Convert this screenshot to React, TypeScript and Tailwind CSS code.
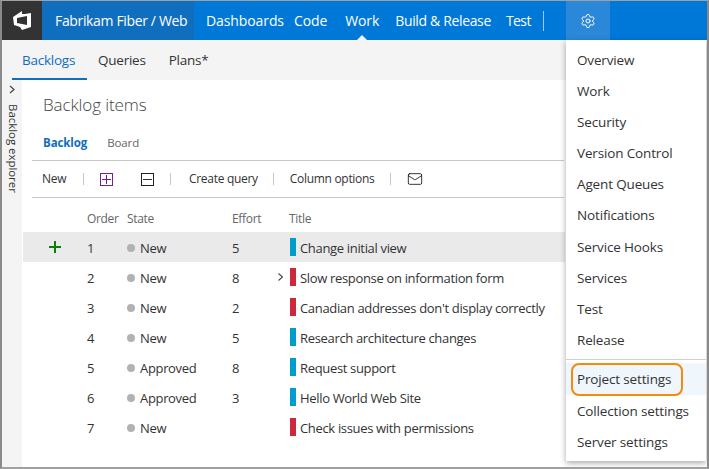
import { Mail, Settings } from "lucide-react"

const NAV = [
  { label: "Dashboards", cls: "" },
  { label: "Code", cls: "ml-[10px]" },
  { label: "Work", cls: "ml-[18px]" },
  { label: "Build & Release", cls: "ml-[16px] tracking-[-0.35px]" },
  { label: "Test", cls: "ml-[15px] tracking-[-0.6px]" },
]
const MENU = ["Overview", "Work", "Security", "Version Control", "Agent Queues", "Notifications", "Service Hooks", "Services", "Test", "Release"]
const ROWS = [
  { order: 1, state: "New", effort: "5", title: "Change initial view", color: "bg-[#009ccc]" },
  { order: 2, state: "New", effort: "8", title: "Slow response on information form", color: "bg-[#cc293d]" },
  { order: 3, state: "New", effort: "2", title: "Canadian addresses don't display correctly", color: "bg-[#cc293d]" },
  { order: 4, state: "New", effort: "5", title: "Research architecture changes", color: "bg-[#009ccc]" },
  { order: 5, state: "Approved", effort: "8", title: "Request support", color: "bg-[#009ccc]" },
  { order: 6, state: "Approved", effort: "3", title: "Hello World Web Site", color: "bg-[#009ccc]" },
  { order: 7, state: "New", effort: "", title: "Check issues with permissions", color: "bg-[#cc293d]" },
]

function Sep() {
  return <span className="h-3 w-px bg-[#c8c8c8]" />
}

export default function App() {
  return (
    <div className="relative flex h-[469px] w-[709px] flex-col overflow-hidden border-x-2 border-t border-b-2 border-x-[#8a8a8a] border-y-[#a0a0a0] bg-white font-['Open_Sans',sans-serif] text-[13px] tracking-[-0.33px] text-[#333]">
      <header className="flex h-[39px] shrink-0 items-center bg-[#0078d7] text-[14px] tracking-[-0.1px] text-white">
        <div className="flex h-full w-10 items-center justify-center bg-[#333]">
          <svg width="20" height="20" viewBox="0 0 20 20" fill="white" fillRule="evenodd">
            <path d="M1 6 L10 0 L10 3 L13 3 L19 2 L19 16 L10 19 L8 16 L2 14 Z M5 7 L5 12 L15 14 L15 5 Z" />
          </svg>
        </div>
        <div className="flex h-full w-[152px] items-center bg-[#106ebe] pl-[13px] tracking-[-0.35px]">Fabrikam Fiber / Web</div>
        <nav className="ml-3 flex h-full items-center">
          {NAV.map((n) => (
            <span key={n.label} className={`relative flex h-full items-center ${n.cls}`}>
              {n.label}
              {n.label === "Work" && <span className="absolute bottom-0 left-1/2 -ml-[5px] h-0 w-0 border-x-[5px] border-b-[5px] border-x-transparent border-b-[#f4f4f4]" />}
            </span>
          ))}
        </nav>
        <span className="ml-3 h-5 w-px bg-[#9ccbf0]" />
        <div className="ml-[22px] flex h-full w-11 items-center justify-center bg-[#2b88d8]">
          <Settings className="h-4 w-4" strokeWidth={1.5} />
        </div>
      </header>

      <div className="flex h-10 shrink-0 items-center gap-[23px] bg-[#f4f4f4] pl-5 text-[13.5px] tracking-[-0.25px]">
        <span className="relative flex h-full items-center text-[#106ebe]">
          Backlogs
          <span className="absolute bottom-0 -left-[10px] -right-3 h-[2px] bg-[#106ebe]" />
        </span>
        <span>Queries</span>
        <span>Plans*</span>
      </div>

      <div className="flex min-h-0 flex-1">
        <aside className="flex w-[20px] shrink-0 flex-col items-center bg-[#f4f4f4] pt-[2px] text-[11.5px] tracking-[-0.05px]">
          <svg width="6" height="9" viewBox="0 0 6 9" fill="none" stroke="#444" strokeWidth="1.2" className="mt-[3px]">
            <path d="M1 1 L5 4.5 L1 8" />
          </svg>
          <span className="ml-[2px] mt-[10px] leading-none [writing-mode:vertical-rl]">Backlog explorer</span>
        </aside>

        <main className="min-w-0 flex-1 pl-[1px]">
          <h1 className="mt-[13px] pl-5 text-[17px] font-light leading-6 tracking-[-0.1px] text-[#444]">Backlog items</h1>
          <div className="mt-[17px] flex gap-[20px] pl-5 text-[11.5px] tracking-[-0.1px]">
            <span className="font-bold text-[#106ebe]">Backlog</span>
            <span className="text-[#666]">Board</span>
          </div>
          <div className="ml-[9px] mt-[9px] flex h-[38px] w-[532px] items-center gap-[16px] border-y border-[#c8c8c8] pl-[10px] text-[12px] tracking-[-0.3px]">
            <span className="w-[25px]">New</span>
            <Sep />
            <span className="flex h-[13px] w-[13px] items-center justify-center border border-[#7a1f8c] text-[#68217a]">
              <svg width="9" height="9" viewBox="0 0 9 9" stroke="currentColor"><path d="M4.5 0 V9 M0 4.5 H9" /></svg>
            </span>
            <span className="ml-[12px] flex h-[13px] w-[13px] items-center justify-center border border-[#222]">
              <svg width="9" height="9" viewBox="0 0 9 9" stroke="currentColor"><path d="M0 4.5 H9" /></svg>
            </span>
            <Sep />
            <span className="-mr-[1px] ml-[2px]">Create query</span>
            <Sep />
            <span>Column options</span>
            <Sep />
            <Mail className="h-4 w-4 text-[#111]" strokeWidth={1.25} />
          </div>

          <div className="mt-[12px] flex h-[18px] items-center text-[12px] text-[#666]">
            <span className="w-[64px]" />
            <span className="w-[40px]">Order</span>
            <span className="w-[105px]">State</span>
            <span className="w-[57px]">Effort</span>
            <span>Title</span>
          </div>
          <div className="mt-[4px]">
            {ROWS.map((r) => (
              <div key={r.order} className={`flex h-[30px] w-[542px] items-center ${r.order === 1 ? "bg-[#eaeaea]" : ""}`}>
                <span className="flex w-[64px] justify-center text-[#107c10]">
                  {r.order === 1 && (
                    <svg width="12" height="12" viewBox="0 0 12 12" stroke="currentColor" strokeWidth="2"><path d="M6 0 V12 M0 6 H12" /></svg>
                  )}
                </span>
                <span className="w-[40px] pt-[2px]">{r.order}</span>
                <span className="flex w-[105px] items-center gap-[5px] pt-[2px]">
                  <span className="h-2 w-2 rounded-full bg-[#b2b2b2]" />
                  {r.state}
                </span>
                <span className="w-[46px] pt-[2px]">{r.effort}</span>
                <span className="w-[12px]">
                  {r.order === 2 && (
                    <svg width="5" height="8" viewBox="0 0 5 8" fill="none" stroke="#444" strokeWidth="1.1"><path d="M0.5 0.5 L4.5 4 L0.5 7.5" /></svg>
                  )}
                </span>
                <span className={`mr-1 h-[18px] w-[6px] ${r.color}`} />
                <span className="whitespace-nowrap pt-[2px]">{r.title}</span>
              </div>
            ))}
          </div>
        </main>
      </div>

      <div className="absolute right-[1px] top-[39px] w-[140px] bg-white pt-[4.6px] text-[13.5px] tracking-[-0.15px] shadow-[0_2px_6px_rgba(0,0,0,0.35)]">
        {MENU.map((m) => (
          <div key={m} className="flex h-[31.1px] items-center pl-[11px]">{m}</div>
        ))}
        <div className="mt-[3px] h-px bg-[#d0d0d0]" />
        <div className="relative mt-[3px] flex h-[32px] items-center bg-[#eff6fc] pl-[11px] pt-[1px]">
          Project settings
          <span className="absolute left-[5px] top-0 h-[33px] w-[112px] rounded-[8px] border-[2.5px] border-[#f58a0b]" />
        </div>
        <div className="mt-[1px] flex h-[31.1px] items-center pl-[11px]">Collection settings</div>
        <div className="flex h-[31.1px] items-center pl-[11px]">Server settings</div>
        <div className="h-[3px]" />
      </div>
    </div>
  )
}
